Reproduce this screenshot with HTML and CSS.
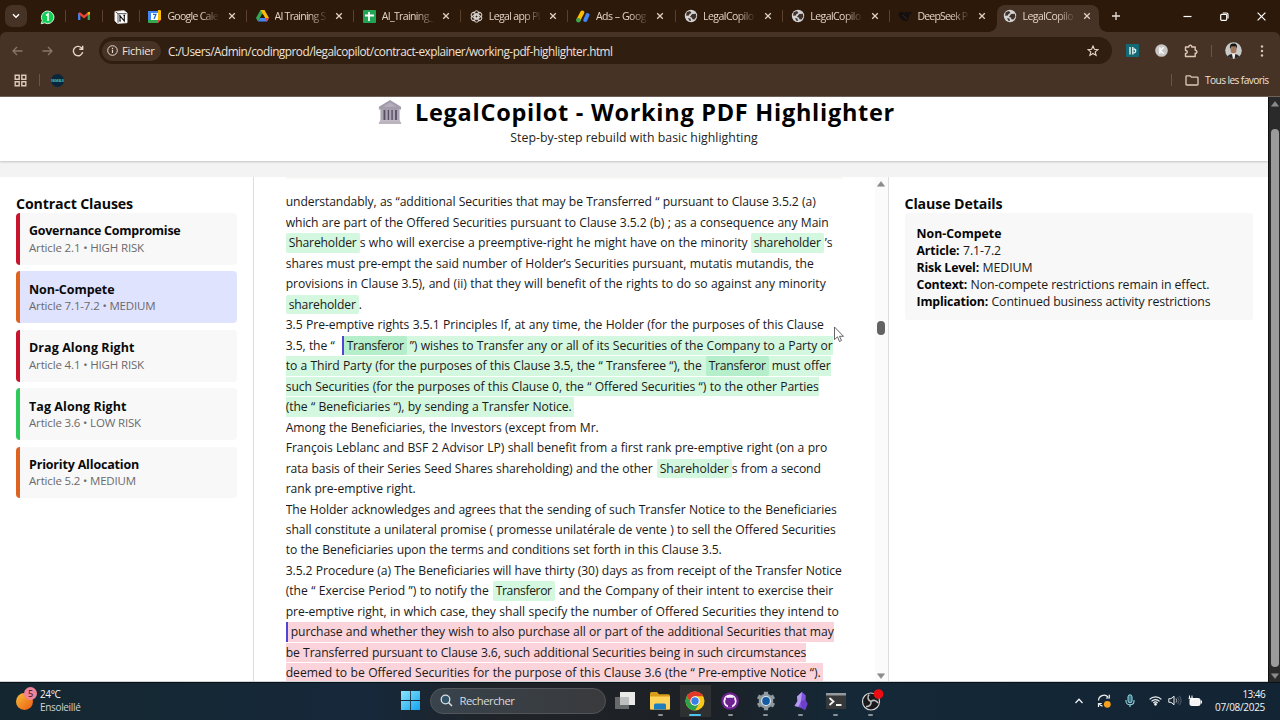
FILE: index.html
```html
<!DOCTYPE html>
<html lang="fr">
<head>
<meta charset="utf-8">
<title>LegalCopilot</title>
<link rel="stylesheet" href="styles.css">
</head>
<body>
<svg class="defs" width="0" height="0">
  <symbol id="globe" viewBox="0 0 14 14"><circle cx="7" cy="7" r="6.2" fill="#d2d2d4"/><path d="M2.6 3.3 6 2l1.500 2-2 1-.6 1.600-2.800.2zM8.200 5l3.600-.3.6 3-2 2.800-2-.2-.4-1.600-2-1zM4 9l2.400.6L7 12l-1.600-.3z" fill="#3f3029"/></symbol>
  <symbol id="close" viewBox="0 0 8 8"><path d="M1.200 1.200l5.600 5.600M6.800 1.200L1.200 6.800" stroke="#dfd0c4" stroke-width="1.300"/></symbol>
  <symbol id="up" viewBox="0 0 8 6"><path d="M4 .5 7.600 5.200H.4z" fill="#8c8c8c" stroke="#8c8c8c" stroke-width=".6" stroke-linejoin="round"/></symbol>
</svg>
<div class="screen">
<div class="tabstrip">
  <div class="tabsearch"><svg width="8" height="6" viewBox="0 0 8 6"><path d="M1 1.200 4 4.300 7 1.200" fill="none" stroke="#fff" stroke-width="1.400"/></svg></div>
  <div class="pin"><svg width="15" height="15" viewBox="0 0 15 15"><path d="M7.600 1a6.300 6.300 0 1 1-3 11.800L1.200 13.800l1.100-3.300A6.300 6.300 0 0 1 7.600 1z" fill="#12d152" stroke="#dff5e3" stroke-width="1"/><path d="M6 5.300 8 4v7" fill="none" stroke="#fff" stroke-width="1.600"/></svg></div>
  <div class="pin"><svg width="12" height="10" viewBox="0 0 12 10"><path d="M1.200 9V2" stroke="#4285f4" stroke-width="2.300"/><path d="M10.800 9V2" stroke="#34a853" stroke-width="2.300"/><path d="M1 1.800 6 6l5-4.200" fill="none" stroke="#ea4335" stroke-width="2.300"/><path d="M9.700 4V1.200L12 .8V3z" fill="#fbbc04"/></svg></div>
  <div class="pin"><svg width="14" height="14" viewBox="0 0 14 14"><path d="M1 1.500 10 .8l3 2.200v9.700L3.400 13.300 1 10.800z" fill="#fff" stroke="#eee"/><path d="M1.600 1.800 4 3.700h8.500M4 3.700v9" fill="none" stroke="#222" stroke-width=".8"/><path d="M6 11V5.800l4.300 5.200V5.400M5.200 5.800h1.500M9.400 5.400h1.700M5.200 11H7" fill="none" stroke="#111" stroke-width="1.100"/></svg></div>
  <div class="tab"><i class="fav"><svg width="13" height="13" viewBox="0 0 13 13"><path d="M0 1h10v3H0z" fill="#4285f4"/><path d="M0 1h3v9H0z" fill="#4285f4"/><path d="M10 0h2a1 1 0 0 1 1 1v9h-3z" fill="#fbbc04"/><path d="M0 10h10v3H1a1 1 0 0 1-1-1z" fill="#34a853"/><path d="M10 10h3l-3 3z" fill="#ea4335"/><path d="M3 3h7v7H3z" fill="#fff"/><path d="M5 4.300h3L6 9" fill="none" stroke="#1967d2" stroke-width="1.200"/></svg></i><span class="tt"><span data-w="50.500">Google Cale</span></span><svg class="x"><use href="#close"/></svg></div>
  <div class="tab"><i class="fav"><svg width="13" height="12" viewBox="0 0 13 12"><path d="M4.500 0h4L4 8 2 11.500 0 8z" fill="#34a853"/><path d="M4.500 0h4L13 8H9z" fill="#fbbc04"/><path d="M4 8h9l-2 3.500H2z" fill="#4285f4"/><path d="M9 8h4l-2 3.500z" fill="#ea4335"/><path d="M6.500 3.700 9 8H4z" fill="#2e190b"/></svg></i><span class="tt"><span data-w="51">AI Training S</span></span><svg class="x"><use href="#close"/></svg></div>
  <div class="tab"><i class="fav"><svg width="13" height="13" viewBox="0 0 13 13"><rect width="13" height="13" rx="1" fill="#23a455"/><path d="M6 2v9M2 5.500h9" stroke="#fff" stroke-width="1.800"/></svg></i><span class="tt"><span data-w="51">AI_Training_</span></span><svg class="x"><use href="#close"/></svg></div>
  <div class="tab"><i class="fav"><svg width="13" height="13" viewBox="0 0 13 13" fill="none" stroke="#d8d2ce" stroke-width="1"><rect x="4.200" y=".8" width="4.600" height="7.200" rx="2.300"/><rect x="4.200" y=".8" width="4.600" height="7.200" rx="2.300" transform="rotate(60 6.500 6.500)"/><rect x="4.200" y=".8" width="4.600" height="7.200" rx="2.300" transform="rotate(120 6.500 6.500)"/><rect x="4.200" y=".8" width="4.600" height="7.200" rx="2.300" transform="rotate(180 6.500 6.500)"/><rect x="4.200" y=".8" width="4.600" height="7.200" rx="2.300" transform="rotate(240 6.500 6.500)"/><rect x="4.200" y=".8" width="4.600" height="7.200" rx="2.300" transform="rotate(300 6.500 6.500)"/></svg></i><span class="tt"><span data-w="51">Legal app Pl</span></span><svg class="x"><use href="#close"/></svg></div>
  <div class="tab"><i class="fav"><svg width="14" height="13" viewBox="0 0 14 13" stroke-linecap="round" stroke-width="4"><path d="M6.300 2.500 2.600 9.500" stroke="#fbbc04"/><path d="M11.500 5 9.300 10" stroke="#4285f4"/><circle cx="2.400" cy="10.300" r="2.200" fill="#34a853"/></svg></i><span class="tt"><span data-w="50">Ads – Goog</span></span><svg class="x"><use href="#close"/></svg></div>
  <div class="tab"><i class="fav"><svg width="14" height="14"><use href="#globe"/></svg></i><span class="tt"><span data-w="50.500">LegalCopilo</span></span><svg class="x"><use href="#close"/></svg></div>
  <div class="tab"><i class="fav"><svg width="14" height="14"><use href="#globe"/></svg></i><span class="tt"><span data-w="50.500">LegalCopilo</span></span><svg class="x"><use href="#close"/></svg></div>
  <div class="tab last"><i class="fav"><svg width="14" height="12" viewBox="0 0 14 12"><path d="M.5 3C2 1 5 1.500 7 3.500c.5-1 .3-2 .8-2.700.7 1.500 2.200 2 4.500 1.200.6 0 1-.5 1.400-1 0 3-1.500 3.500-2.700 4 0 2-.6 3.500-1.500 4.500l1 1c-3 1-6 .5-8-2C1.200 7 .5 5 .5 3z" fill="#15100f"/><path d="M4.500 5.500c2 .2 2.500 2 4 3.500" stroke="#3c2a20" fill="none"/></svg></i><span class="tt"><span data-w="50">DeepSeek P</span></span><svg class="x"><use href="#close"/></svg></div>
  <div class="tab active"><i class="fav"><svg width="14" height="14"><use href="#globe"/></svg></i><span class="tt"><span data-w="50.500">LegalCopilo</span></span><svg class="x"><use href="#close"/></svg></div>
  <svg class="plus" width="10" height="10" viewBox="0 0 10 10"><path d="M5 1v8M1 5h8" stroke="#eadfd6" stroke-width="1.300"/></svg>
  <div class="winbtns">
    <svg width="9" height="9" viewBox="0 0 9 9"><path d="M.5 4.500h8" stroke="#fff" stroke-width="1.200"/></svg>
    <svg width="9" height="9" viewBox="0 0 9 9" fill="none" stroke="#fff" stroke-width="1.200"><rect x=".7" y="2.300" width="6" height="6" rx="1"/><path d="M2.700 1h3.800Q8 1 8 2.600v4"/></svg>
    <svg width="9" height="9" viewBox="0 0 9 9"><path d="M.6.6l7.800 7.800M8.400.6.6 8.400" stroke="#fff" stroke-width="1.200"/></svg>
  </div>
</div>
<div class="chrome">
  <div class="toolbar">
    <div class="nav">
      <svg width="11" height="10" viewBox="0 0 11 10" fill="none" stroke="#8b7566" stroke-width="1.300"><path d="M10.500 5H1M5 1 1 5l4 4"/></svg>
      <svg width="11" height="10" viewBox="0 0 11 10" fill="none" stroke="#8b7566" stroke-width="1.300"><path d="M.5 5H10M6 1l4 4-4 4"/></svg>
      <svg width="12" height="12" viewBox="0 0 12 12" fill="none" stroke="#e6d6c9" stroke-width="1.400"><path d="M10.700 7.200A4.700 4.700 0 1 1 9.400 2.700L10.500 4M10.700.8V4.200H7.300"/></svg>
    </div>
    <div class="omni">
      <div class="chip"><svg width="11" height="11" viewBox="0 0 11 11"><circle cx="5.500" cy="5.500" r="4.800" fill="none" stroke="#e8d8cb"/><path d="M5.500 4.800v3.200M5.500 2.700v1.200" stroke="#e8d8cb" stroke-width="1.200"/></svg><span data-w="32.500">Fichier</span></div>
      <span class="url" data-w="444.500">C:/Users/Admin/codingprod/legalcopilot/contract-explainer/working-pdf-highlighter.html</span>
      <svg class="star" width="12" height="12" viewBox="0 0 12 12"><path d="M6 1l1.400 3.300 3.500.3-2.700 2.300.9 3.500L6 8.500l-3.100 1.900.9-3.500L1.100 4.600l3.500-.3z" fill="none" stroke="#e8d8cb" stroke-width="1.100"/></svg>
    </div>
    <svg class="e1" width="13" height="13" viewBox="0 0 13 13"><rect width="13" height="13" rx="1" fill="#126a74"/><path d="M4 3v7.500M6.800 3v7.500" stroke="#e7f5f4" stroke-width="1.400"/><path d="M7.500 5c3 .3 3 3.500 0 4" fill="none" stroke="#e7f5f4" stroke-width="1.300"/></svg>
    <svg class="e2" width="13" height="13" viewBox="0 0 13 13"><circle cx="6.500" cy="6.500" r="6.300" fill="#c9c7c6"/><path d="M4.900 3.200v6.600M8.600 3.300 5.300 6.700l3.500 3.100" fill="none" stroke="#fff" stroke-width="1.400"/></svg>
    <svg class="e3" width="14" height="14" viewBox="0 0 14 14"><path d="M1.500 3h3.300c-.4-2.300 3.400-2.300 3 0h3.400v3.300c2.300-.3 2.300 3.300 0 3v3.200H1.500V9.500c2.300.2 2.300-3.300 0-3z" fill="none" stroke="#dfc9b4" stroke-width="1.400" stroke-linejoin="round"/></svg>
    <i class="vsep"></i>
    <svg class="avatar" width="17" height="17" viewBox="0 0 17 17"><defs><clipPath id="av"><circle cx="8.500" cy="8.500" r="8.300"/></clipPath></defs><g clip-path="url(#av)"><path d="M0 0h17v17H0z" fill="#c8cac8"/><path d="M2 17c0-4 3-5 6.500-5s6 1 6.500 5z" fill="#272629"/><path d="M6.800 11h3.500l-.7 6H8z" fill="#f5f3f0"/><ellipse cx="8.500" cy="7.500" rx="3" ry="4" fill="#a2765d"/><path d="M5 7C4.500 2.500 6 1.500 8.700 1.500S12.500 3 12 7l-1-2.500-4.500-.3z" fill="#171414"/></g></svg>
    <svg class="dots" width="4" height="12" viewBox="0 0 4 12" fill="#dcc8b8"><circle cx="2" cy="1.500" r="1.200"/><circle cx="2" cy="6" r="1.200"/><circle cx="2" cy="10.500" r="1.200"/></svg>
  </div>
  <div class="bookmarks">
    <svg width="13" height="13" viewBox="0 0 13 13" fill="none" stroke="#dfc9b8" stroke-width="1.400"><path d="M1.200 1.200h4v4h-4zM7.800 1.200h4v4h-4zM1.200 7.800h4v4h-4zM7.800 7.800h4v4h-4z"/></svg>
    <i class="vsep"></i>
    <div class="bm">IBM&amp;S</div>
    <i class="vsep push"></i>
    <svg class="fold" width="14" height="11" viewBox="0 0 14 11"><path d="M1 1.500q0-.7.700-.7h3.500L6.500 2.200h5.800q.7 0 .7.700v6.400q0 .7-.7.700H1.700Q1 10 1 9.300z" fill="none" stroke="#dfc9b8" stroke-width="1.300"/></svg>
    <span data-w="63.500">Tous les favoris</span>
  </div>
</div>
<div class="viewport">
  <div class="page">
    <header>
      <h1><svg width="24" height="25" viewBox="0 0 26 26" preserveAspectRatio="none"><path d="M13 0 25 7v3H1V7z" fill="#a39cab"/><path d="M3 10h20v11H3z" fill="#5b4f66"/><path d="M3 10h3v11H3zM8 10h2.500v11H8zM12 10h2.500v11H12zM16 10h2.500v11H16zM20.500 10H23v11h-2.500z" fill="#aca5b3"/><path d="M2 21h22v1.800H2zM1 22.800h24V25H1z" fill="#bbb4bf"/><path d="M13 2.500 20 7H6z" fill="#b6afbb"/></svg><span data-w="480">LegalCopilot - Working PDF Highlighter</span></h1>
      <p><span data-w="247.500">Step-by-step rebuild with basic highlighting</span></p>
    </header>
    <main>
      <aside class="clauses">
        <h2><span data-w="117">Contract Clauses</span></h2>
        <div class="card high"><b data-w="151.500">Governance Compromise</b><small data-w="115">Article 2.1 • HIGH RISK</small></div>
        <div class="card med sel"><b data-w="85.500">Non-Compete</b><small data-w="126.500">Article 7.1-7.2 • MEDIUM</small></div>
        <div class="card high"><b data-w="105.500">Drag Along Right</b><small data-w="115">Article 4.1 • HIGH RISK</small></div>
        <div class="card low"><b data-w="97.500">Tag Along Right</b><small data-w="112">Article 3.6 • LOW RISK</small></div>
        <div class="card med"><b data-w="110">Priority Allocation</b><small data-w="107">Article 5.2 • MEDIUM</small></div>
      </aside>
      <section class="doc">
        <div class="text">
          <div class="prev"></div>
          <div class="ln"><span data-w="530">understandably, as “additional Securities that may be Transferred “ pursuant to Clause 3.5.2 (a)</span></div>
          <div class="ln"><span data-w="543">which are part of the Offered Securities pursuant to Clause 3.5.2 (b) ; as a consequence any Main</span></div>
          <div class="ln"><span class="g p" data-w="68">Shareholder</span><span data-w="388">s who will exercise a preemptive-right he might have on the minority</span><span class="g p m3" data-w="67">shareholder</span><span class="m1" data-w="8">’s</span></div>
          <div class="ln"><span data-w="528">shares must pre-empt the said number of Holder’s Securities pursuant, mutatis mutandis, the</span></div>
          <div class="ln"><span data-w="540">provisions in Clause 3.5), and (ii) that they will benefit of the rights to do so against any minority</span></div>
          <div class="ln"><span class="g p" data-w="67">shareholder</span><span data-w="3">.</span></div>
          <div class="ln"><span data-w="538">3.5 Pre-emptive rights 3.5.1 Principles If, at any time, the Holder (for the purposes of this Clause</span></div>
          <div class="ln"><span data-w="49">3.5, the “</span><div class="g group bar m7"><span class="d p" data-w="57">Transferor</span><span class="m3" data-w="423">”) wishes to Transfer any or all of its Securities of the Company to a Party or</span></div></div>
          <div class="ln"><div class="g group"><span data-w="416">to a Third Party (for the purposes of this Clause 3.5, the “ Transferee “), the</span><span class="d p m4" data-w="57">Transferor</span><span class="m3" data-w="59">must offer</span></div></div>
          <div class="ln"><span class="g" data-w="533">such Securities (for the purposes of this Clause 0, the “ Offered Securities “) to the other Parties</span></div>
          <div class="ln"><span class="g pr" data-w="286">(the “ Beneficiaries “), by sending a Transfer Notice.</span></div>
          <div class="ln"><span data-w="313">Among the Beneficiaries, the Investors (except from Mr.</span></div>
          <div class="ln"><span data-w="541.500">François Leblanc and BSF 2 Advisor LP) shall benefit from a first rank pre-emptive right (on a pro</span></div>
          <div class="ln"><span data-w="367">rata basis of their Series Seed Shares shareholding) and the other</span><span class="g p m4" data-w="69">Shareholder</span><span data-w="89">s from a second</span></div>
          <div class="ln"><span data-w="130">rank pre-emptive right.</span></div>
          <div class="ln"><span data-w="551">The Holder acknowledges and agrees that the sending of such Transfer Notice to the Beneficiaries</span></div>
          <div class="ln"><span data-w="550">shall constitute a unilateral promise ( promesse unilatérale de vente ) to sell the Offered Securities</span></div>
          <div class="ln"><span data-w="436">to the Beneficiaries upon the terms and conditions set forth in this Clause 3.5.</span></div>
          <div class="ln"><span data-w="556">3.5.2 Procedure (a) The Beneficiaries will have thirty (30) days as from receipt of the Transfer Notice</span></div>
          <div class="ln"><span data-w="203">(the “ Exercise Period ”) to notify the</span><span class="g p m4" data-w="56">Transferor</span><span class="m4" data-w="274.500">and the Company of their intent to exercise their</span></div>
          <div class="ln"><span data-w="553">pre-emptive right, in which case, they shall specify the number of Offered Securities they intend to</span></div>
          <div class="ln"><div class="r group bar b2"><span data-w="543">purchase and whether they wish to also purchase all or part of the additional Securities that may</span></div></div>
          <div class="ln"><span class="r" data-w="520.500">be Transferred pursuant to Clause 3.6, such additional Securities being in such circumstances</span></div>
          <div class="ln"><span class="r pr" data-w="535">deemed to be Offered Securities for the purpose of this Clause 3.6 (the “ Pre-emptive Notice “).</span></div>
        </div>
        <div class="scroll light"><svg width="8" height="6"><use href="#up"/></svg><i></i><svg class="flip" width="8" height="6"><use href="#up"/></svg></div>
      </section>
      <aside class="details">
        <h2><span data-w="98">Clause Details</span></h2>
        <div class="info">
          <div><b data-w="85">Non-Compete</b></div>
          <div><b data-w="43">Article:</b><span data-w="38">7.1-7.2</span></div>
          <div><b data-w="62.500">Risk Level:</b><span data-w="50">MEDIUM</span></div>
          <div><b data-w="50.500">Context:</b><span data-w="239">Non-compete restrictions remain in effect.</span></div>
          <div><b data-w="71.500">Implication:</b><span data-w="219">Continued business activity restrictions</span></div>
        </div>
      </aside>
    </main>
    <svg class="cursor" width="12" height="17" viewBox="0 0 12 17"><path d="M1.500 1v12.500l3-2.700 2 4.700 2-1-2-4.200h4z" fill="#fff" stroke="#555" stroke-width=".9"/></svg>
  </div>
  <div class="scroll dark"><svg width="8" height="6"><use href="#up"/></svg><i></i><svg class="flip" width="8" height="6"><use href="#up"/></svg></div>
</div>
<footer class="taskbar">
  <div class="weather"><i class="sun"><em>5</em></i><div><span data-w="20.500">24°C</span><span class="dim" data-w="40.500">Ensoleillé</span></div></div>
  <svg class="start" width="19" height="19" viewBox="0 0 19 19"><defs><linearGradient id="w" x2="1" y2="1"><stop stop-color="#8be6fb"/><stop offset="1" stop-color="#13a2f0"/></linearGradient></defs><path d="M0 0h9.100v9.100H0zM9.900 0H19v9.100H9.900zM0 9.900h9.100V19H0zM9.900 9.900H19V19H9.900z" fill="url(#w)"/></svg>
  <div class="search"><svg width="13" height="13" viewBox="0 0 13 13"><circle cx="5.500" cy="5.500" r="4.300" fill="#33566b" stroke="#dce2e5" stroke-width="1.300"/><path d="M8.700 8.700 12 12" stroke="#dce2e5" stroke-width="1.500"/></svg><span data-w="55">Rechercher</span></div>
  <div class="apps">
    <div><svg width="20" height="18" viewBox="0 0 20 18"><path d="M0 5h14v12H0z" fill="#68696b"/><path d="M5 0h15v13H5z" fill="#e9e9e8"/><path d="M5 5h9v8H5z" fill="#bdbebe"/></svg></div>
    <div class="run"><svg width="20" height="18" viewBox="0 0 20 18"><path d="M0 1.500Q0 0 1.500 0H7l2 2.200h9.500Q20 2.200 20 4v13.500H0z" fill="#d99b18"/><path d="M0 4.500h20V16q0 1.500-1.500 1.500h-17Q0 17.500 0 16z" fill="#ffd35a"/><path d="M4 17.500V13q0-1.500 1.500-1.500h9q1.500 0 1.500 1.500v4.500z" fill="#1d7ec0"/></svg></div>
    <div class="run on"><svg width="20" height="20" viewBox="0 0 20 20"><circle cx="10" cy="10" r="9.500" fill="#fbc718"/><path d="M1.770 5.250A9.500 9.500 0 0 1 18.230 5.250H10L5.900 12.400z" fill="#e0392c"/><path d="M1.770 5.250A9.500 9.500 0 0 0 10 19.500L14.100 12.400H5.900z" fill="#2fa14c"/><circle cx="10" cy="10" r="4.700" fill="#fff"/><circle cx="10" cy="10" r="3.700" fill="#377ee8"/></svg></div>
    <div class="run"><svg width="18" height="18" viewBox="0 0 18 18"><circle cx="9" cy="9" r="8.800" fill="#6e2191"/><circle cx="9" cy="9" r="6.600" fill="#f5edf8"/><path d="M6.900 15.500v-2.300c-2.700-1-3.400-3.900-2-5.800l-.1-2.200 2 .8c1.400-.4 3-.4 4.400 0l2-.8v2.200c1.400 2 .6 4.800-2.100 5.800v2.300z" fill="#6e2191"/></svg></div>
    <div class="run"><svg width="20" height="20" viewBox="0 0 20 20"><circle cx="10" cy="10" r="7.300" fill="#8f999f"/><path d="M10 .8v18.400M2 5.400l16 9.200M18 5.400 2 14.600" stroke="#8f999f" stroke-width="4.200"/><circle cx="10" cy="10" r="5" fill="#e0e7eb"/><circle cx="10" cy="10" r="3.900" fill="#145ca3"/></svg></div>
    <div class="run"><svg width="14" height="18" viewBox="0 0 14 18"><path d="M8 0 3 4.500 3.500 9 .5 14l7 2 3.500 2 2.500-6-2-4 .3-4.500z" fill="#8054dc"/><path d="M8 0 3 4.500 3.500 9 .5 14l4 .7L7 9z" fill="#b49af0"/><path d="M7 9l4.500-1 2 4-2.500 6-3.500-2z" fill="#6b40ca"/></svg></div>
    <div class="run"><svg width="20" height="16" viewBox="0 0 20 16"><rect width="20" height="16" rx="1" fill="#37383a"/><path d="M0 0h20v2.500H0z" fill="#95999c"/><path d="M3.500 5 7.500 8.500l-4 3.500M10 12h5.500" fill="none" stroke="#f2f2f2" stroke-width="1.800"/></svg></div>
    <div class="run"><svg width="24" height="24" viewBox="0 0 24 24"><circle cx="12" cy="12.500" r="8.500" fill="#19191b" stroke="#d6d6d6" stroke-width="1.200"/><path d="M12 12.500c-3-1-4-4-2-7M12 12.500c2.500-2 5.500-1 7 1.500M12 12.500c.5 3-2 5.500-5 5" fill="none" stroke="#bdbdbd" stroke-width="1.600"/><circle cx="19.500" cy="5" r="4.800" fill="#ed0c12"/></svg></div>
  </div>
  <div class="tray">
    <svg width="8" height="6" viewBox="0 0 8 6"><path d="M.5 5 4 1.300 7.500 5" fill="none" stroke="#f1f1f1" stroke-width="1.300"/></svg>
    <svg class="t2" width="14" height="14" viewBox="0 0 14 14"><path d="M1.500 6.500A5.500 5.500 0 0 1 11 3M12.300.8V4H9M5.500 12.200A5.500 5.500 0 0 1 2 9.500M1.500 13V9.500h3.300" fill="none" stroke="#eee" stroke-width="1.200"/><circle cx="10.300" cy="10.300" r="3.400" fill="#f6a11c"/></svg>
    <svg class="t3" width="10" height="14" viewBox="0 0 10 14"><rect x="3" y=".8" width="4" height="8" rx="2" fill="#3a7887" stroke="#9bd7e3"/><path d="M1 6v1c0 5 8 5 8 0V6M5 10.800V13" fill="none" stroke="#9bd7e3" stroke-width="1.100"/></svg>
    <svg class="t4" width="13" height="11" viewBox="0 0 13 11" fill="none" stroke="#f1f1f1" stroke-width="1.200"><path d="M.6 4.400a8 8 0 0 1 11.800 0M2.500 6.300a5.500 5.500 0 0 1 8 0M4.400 8a3 3 0 0 1 4.200 0"/><circle cx="6.500" cy="9.300" r=".8" fill="#fff"/></svg>
    <svg class="t5" width="14" height="11" viewBox="0 0 14 11" fill="none" stroke="#eee"><path d="M.8 3.700H3L6 1.200v8.600L3 7.300H.8z"/><path d="M8 3.500q1.400 2 0 4" stroke="#aeb6bd"/><path d="M9.700 2q2.500 3.500 0 7M11.400.8q3.300 4.700 0 9.400" stroke="#53606c"/></svg>
    <svg class="t6" width="14" height="12" viewBox="0 0 14 12"><rect x="2" y="3.500" width="10" height="7" rx="1.500" fill="#f5f5f5" stroke="#fff"/><path d="M13.300 5.500v3" stroke="#fff" stroke-width="1.300"/><path d="M1.500.5v3M4 .5v3M.5 3.300h4.500v2H2.700V9" fill="none" stroke="#fff"/></svg>
    <div class="clock"><span data-w="22.500">13:46</span><span data-w="50">07/08/2025</span></div>
  </div>
</footer>
</div>
<script src="fit.js"></script>
</body>
</html>
```

FILE: styles.css
```css
* { box-sizing: border-box; }
body { margin: 0; font-family: "Open Sans", "Noto Sans", sans-serif; color: #111; }
.defs { position: absolute; }
.screen { width: 1280px; height: 720px; display: flex; flex-direction: column; overflow: hidden; background: #2d190a; }
svg { display: block; flex: none; }
[data-w] { display: block; flex: none; white-space: pre; }

.tabstrip { height: 32px; flex: none; display: flex; align-items: center; color: #e3d3c6; font-size: 10.500px; }
.tabsearch { width: 22px; height: 22px; margin: 0 2.500px 0 5px; border-radius: 7px; background: #473325; display: grid; place-items: center; flex: none; }
.pin { width: 36.800px; height: 12px; flex: none; display: grid; place-items: center; border-right: 1px solid #5b402e; }
.tab { width: 107.150px; height: 12px; flex: none; display: flex; align-items: center; border-right: 1px solid #5b402e; }
.tab.last { border-right-color: transparent; }
.fav { width: 14px; margin-left: 8px; display: grid; place-items: center; flex: none; }
.tt { width: 52px; margin: 0 8.500px 0 5.500px; flex: none; line-height: 20px; mask-image: linear-gradient(90deg, #000 65%, transparent 102%); }
.x { width: 8px; height: 8px; }
.tab.active { position: relative; width: 102px; height: 27px; align-self: flex-end; padding-bottom: 5px; background: #473325; border: 0; border-radius: 8px 8px 0 0; }
.tab.active::before, .tab.active::after { content: ""; position: absolute; bottom: 0; width: 8px; height: 8px; }
.tab.active::before { left: -8px; background: radial-gradient(circle at 0 0, transparent 7.500px, #473325 8px); }
.tab.active::after { right: -8px; background: radial-gradient(circle at 100% 0, transparent 7.500px, #473325 8px); }
.tab.active .fav { margin-left: 6px; }
.plus { margin-left: 12px; }
.winbtns { margin-left: auto; margin-right: 14px; display: flex; gap: 28px; }

.chrome { height: 65px; flex: none; background: #473325; border-bottom: 1px solid #6f625a; border-radius: 6px 6px 0 0; color: #efe2d8; }
.toolbar { height: 37px; display: flex; align-items: center; }
.nav { display: flex; align-items: center; gap: 19px; margin-left: 12px; width: 87px; }
.omni { width: 1013px; height: 27px; border-radius: 14px; background: #301e11; display: flex; align-items: center; font-size: 11.800px; }
.chip { width: 59px; height: 20px; margin: 0 7px 0 3px; border-radius: 10px; background: #473325; display: flex; align-items: center; gap: 4px; padding-left: 5px; font-size: 11.300px; }
.star { margin-left: auto; margin-right: 13px; }
.e1 { margin-left: 14px; }
.e2 { margin-left: 16px; }
.e3 { margin-left: 16px; }
.vsep { width: 1px; height: 12px; background: #70543f; flex: none; }
.toolbar .vsep { margin-left: 13px; }
.avatar { margin-left: 13px; }
.dots { margin-left: 18px; }
.bookmarks { height: 22px; display: flex; align-items: center; padding-left: 14px; font-size: 10.200px; }
.bookmarks .vsep { margin: 0 12px; }
.bm { width: 13px; height: 13px; margin-left: -1px; border-radius: 50%; background: #08263c; color: #49b8bf; font-size: 4px; font-weight: 700; text-align: center; line-height: 13px; }
.bookmarks .vsep.push { margin: 0 13px 0 auto; }
.fold { margin-right: 6px; }
.bookmarks > span { margin-right: 11.500px; line-height: 14px; margin-top: -1px; }

.viewport { height: 585px; flex: none; display: flex; background: #fff; }
.page { position: relative; width: 1268px; background: #f3f3f3; display: flex; flex-direction: column; }
header { height: 64px; background: #fff; box-shadow: 0 1px 2px #0003; display: flex; flex-direction: column; align-items: center; }
h1, h2, p { margin: 0; }
h1 { height: 31px; display: flex; align-items: center; gap: 13px; font-size: 23.500px; line-height: 31px; color: #000; margin-left: 5px; }
h1 span { margin-top: -1px; }
p { font-size: 12.300px; line-height: 18px; padding-top: 1px; color: #222; }
main { height: 505px; margin-top: 16px; display: flex; background: #fff; border-bottom: 1px solid #cdd3d4; }
h2 { height: 20px; padding-top: 1px; font-size: 14.200px; line-height: 20px; color: #0a0a0a; }
.clauses { width: 254px; padding: 16px 16px 0; border-right: 1px solid #dcdcdc; }
.card { height: 51.700px; margin-bottom: 6.750px; padding: 10.200px 0 0 9px; border-left: 4px solid; border-radius: 4px; background: #f8f8f9; color: #0a0a0a; }
.card b { font-size: 12.500px; line-height: 16.500px; }
.card small { font-size: 11.500px; line-height: 16px; color: #6a6a6c; }
.high { border-color: #c8152d; }
.med { border-color: #dd6420; }
.low { border-color: #2fca5b; }
.sel { background: #e0e3fe; }

.doc { width: 635px; border-right: 1px solid #dcdcdc; display: flex; padding-left: 31.700px; }
.text { width: 589.300px; font-size: 12.150px; height: 504px; overflow: hidden; color: #1a1a1a; word-spacing: .3px; }
.prev { width: 557px; height: 2px; margin-bottom: 13px; background: #f8f8f4; }
.ln { display: flex; align-items: center; height: 20.480px; line-height: 19.500px; }
.group { display: flex; flex: none; }
.g { background: #d4f7df; }
.d { background: #b5eecb; }
.r { background: #fad4da; }
.p { padding: 0 3px; border-radius: 2px; }
.pr { padding-right: 2.500px; }
.bar { border-left: 2px solid #4f46d8; }
.b2 { padding-left: 3px; }
.m1 { margin-left: 1px; }
.m3 { margin-left: 3px; }
.m4 { margin-left: 4px; }
.m7 { margin-left: 7px; }
.scroll { display: flex; flex-direction: column; align-items: center; flex: none; }
.scroll i { width: 8px; border-radius: 4px; }
.light { width: 13px; background: #fbfbfb; padding: 4px 0 2px; }
.light i { height: 14px; margin: 134px 0 auto; background: #636363; }
.flip { transform: scaleY(-1); }
.dark { width: 12px; background: #2a2a2a; border-left: 1px solid #101010; padding: 4px 0 3px; }
.dark i { height: 538px; margin: 22px 0 auto; background: #9b9b9b; }

.details { padding: 16px 16px 0 15.500px; width: 379px; }
.info { width: 348px; height: 107px; padding: 13px 12px 0; border-radius: 3px; background: #f8f8f8; font-size: 12.300px; line-height: 16.900px; color: #1a1a1a; }
.info div { display: flex; gap: 3.500px; }
.info b { color: #050505; }
.cursor { position: absolute; left: 833px; top: 229px; }

.taskbar { height: 38px; flex: none; display: flex; align-items: center; padding-bottom: 2px; border-top: 1px solid #0a1116; color: #f4f4f4; background: linear-gradient(90deg, #142730 0, #16283a 29%, #202327 39%, #1d2024 54%, #142837 66%, #132434 100%); font-size: 10px; }
.weather { width: 400.500px; padding-left: 16px; display: flex; gap: 7px; line-height: 13px; }
.dim { color: #cdd2d5; }
.sun { position: relative; width: 17px; height: 17px; margin-top: 5px; border-radius: 50%; background: linear-gradient(135deg, #f6bd37, #ef5b16); }
.sun em { position: absolute; left: 8px; top: -6px; width: 13px; height: 13px; border-radius: 50%; background: #ef829b; color: #2a1218; font-style: normal; font-size: 9px; line-height: 13px; text-align: center; }
.search { width: 176px; height: 26px; margin-left: 10px; padding-left: 9px; border-radius: 13px; border: 1px solid #52565a; background: linear-gradient(90deg, #38434c, #393a3c); display: flex; align-items: center; gap: 7px; font-size: 11.300px; color: #d8dbdd; }
.apps { display: flex; margin-left: 2px; }
.apps div { position: relative; width: 35.150px; height: 32px; display: grid; place-items: center; }
.run::after { content: ""; position: absolute; left: 15px; bottom: 1px; width: 5px; height: 2px; border-radius: 1px; background: #8b9094; }
.on { background: linear-gradient(90deg, transparent 2px, #2f3032 2px, #2f3032 33px, transparent 33px); }
.run.on::after { left: 11.500px; width: 12px; background: #4fc3ef; }
.tray { margin-left: auto; margin-right: 15px; display: flex; align-items: center; }
.t2 { margin-left: 14px; }
.t3 { margin-left: 14px; }
.t4 { margin-left: 14.500px; }
.t5 { margin-left: 6px; }
.t6 { margin-left: 6px; }
.clock { width: 50px; margin-left: 13px; line-height: 13px; display: flex; flex-direction: column; align-items: flex-end; }
```

FILE: fit.js
```js
// Spread each label's letters so that it fills its declared text width.
document.querySelectorAll('[data-w]').forEach(function (el) {
  var target = parseFloat(el.dataset.w);
  var range = document.createRange();
  range.selectNodeContents(el);
  var natural = range.getBoundingClientRect().width;
  el.style.letterSpacing = ((target - natural) / el.textContent.length).toFixed(4) + 'px';
});
```
